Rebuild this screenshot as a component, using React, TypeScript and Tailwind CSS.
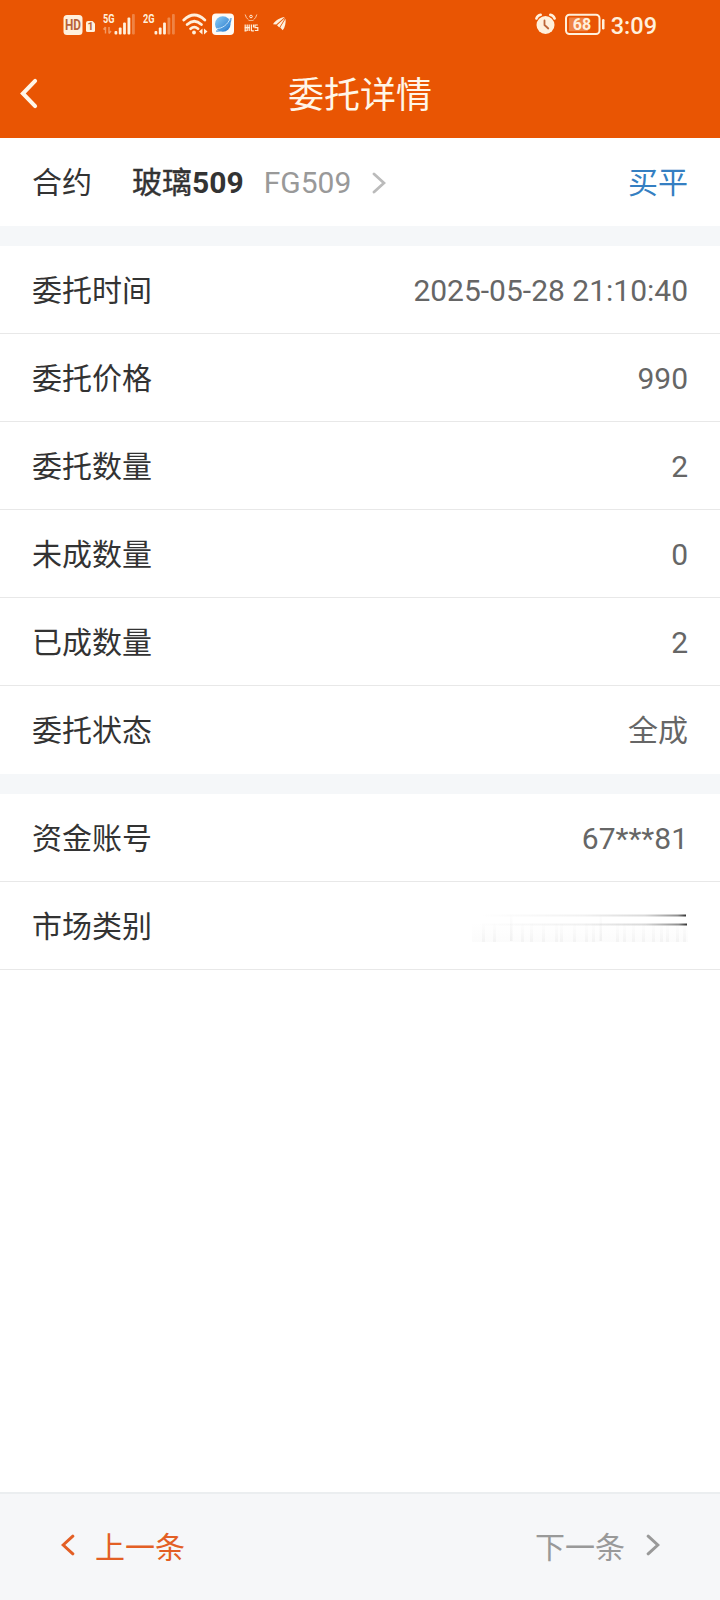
import React from "react";

type RowData = { label: string; value: React.ReactNode };

const CREAM = "#fff0dc";

function HdIcon() {
  return (
    <svg width="34" height="24" viewBox="0 0 34 24" className="ml-[63px]">
      <rect x="0.5" y="3" width="19" height="20" rx="3.5" fill={CREAM} />
      <text x="10" y="18" textAnchor="middle" fontSize="14" fontWeight="700" fill="#b8633a" className="font-['Roboto',sans-serif]" textLength="16" lengthAdjust="spacingAndGlyphs">HD</text>
      <path d="M25 9h4.500l2.500 2.500V18.500q0 1.500-1.500 1.500H24.500q-1.500 0-1.500-1.500V11q0-2 2-2z" fill={CREAM} />
      <text x="27.400" y="18.200" textAnchor="middle" fontSize="10.500" fontWeight="700" fill="#b8633a" className="font-['Roboto',sans-serif]">1</text>
    </svg>
  );
}

function SignalIcon({ label, weak }: { label: string; weak?: boolean }) {
  return (
    <svg width="35" height="24" viewBox="0 0 35 24">
      <text x="0" y="10.500" fontSize="12.500" fontWeight="700" fill={CREAM} textLength="11.500" lengthAdjust="spacingAndGlyphs" className="font-['Roboto',sans-serif]">{label}</text>
      {!weak && <path d="M2.500 21.500v-6.500M0.500 17.500l2-2.500M6 15v6.500M8 19l-2 2.500" stroke={CREAM} strokeWidth="1.400" strokeOpacity=".45" fill="none" />}
      <g fill={CREAM}>
        <rect x="11.500" y="19" width="2.800" height="3.500" rx="1" />
        <rect x="15.800" y="15.500" width="2.800" height="7" rx="1" />
        <rect x="20.100" y="10.500" width="2.800" height="12" rx="1" />
        <rect x="24.500" y="5.500" width="2.800" height="17" rx="1" opacity={weak ? 0.35 : 1} />
        <rect x="29" y="2" width="2.800" height="20.500" rx="1" opacity=".3" />
      </g>
    </svg>
  );
}

function WifiIcon() {
  return (
    <svg width="26" height="24" viewBox="0 0 26 24" fill="none" stroke={CREAM} strokeWidth="2.800" strokeLinecap="round">
      <path d="M1.800 8Q12.300-2 22.800 8M5.200 12.500Q12.300 6 19.400 12.500M8.600 16.700Q12.300 13.500 16 16.700" />
      <circle cx="12" cy="20.500" r="1.900" fill={CREAM} stroke="none" />
      <path d="M20.500 16.500V22.500l-3.500-3zM22 16.500V22.500l3.500-3z" fill={CREAM} stroke="none" />
    </svg>
  );
}

function GlobeIcon() {
  return (
    <svg width="22" height="24" viewBox="0 0 22 24" className="ml-1">
      <defs>
        <linearGradient id="globe" x1="0" y1="0" x2="1" y2="1">
          <stop offset="0" stopColor="#8ccdf4" />
          <stop offset="1" stopColor="#2475cb" />
        </linearGradient>
      </defs>
      <rect y="1.500" width="22" height="21.500" rx="4" fill="#fffaf4" />
      <circle cx="10.800" cy="12" r="7.800" fill="url(#globe)" />
      <path d="M4.500 16.500C10 17 16.500 12 17.800 6.500" stroke="#c4e4fa" strokeWidth="1" fill="none" />
      <path d="M4 19C11 19.500 19 13.500 19 6" stroke="#4a97dc" strokeWidth="1.200" fill="none" />
    </svg>
  );
}

function EmblemIcon() {
  return (
    <svg width="15" height="24" viewBox="0 0 15 24" className="ml-[10px]" fill="none" stroke={CREAM}>
      <path d="M1.200 2.500Q2 6 4.200 7.500M12.800 2.500Q12 6 9.800 7.500" strokeWidth="1" opacity=".75" />
      <circle cx="7" cy="4.500" r="1.300" strokeWidth="1" />
      <path d="M4.500 8.500h5" strokeWidth="1" opacity=".6" />
      <path d="M1.200 12.500v6.500M3.200 12.500v6.500M5.200 12.500v6.500M0.500 15.700h5.500M0.500 18.800h2M7.400 12.500v6.500M7.400 18.800h2.500M9.500 12.500v3M13.800 13h-2.800v2.700h2.800v2.800h-3" strokeWidth="1.200" />
    </svg>
  );
}

function WingIcon() {
  return (
    <svg width="14" height="24" viewBox="0 0 14 24" className="ml-[14px]" fill={CREAM}>
      <path d="M11.800 5C7.500 5.500 2.500 8 0 12.300l3.300.2zM12.300 5.800L4 13.300l2.300 2.200zM12.600 6.700L7.200 15.500l2.500 2.700C12 15.500 13 11 12.600 6.700z" />
    </svg>
  );
}

function AlarmIcon() {
  return (
    <svg width="22" height="24" viewBox="0 0 22 24">
      <circle cx="10.500" cy="13" r="9" fill={CREAM} />
      <path d="M1.400 6.500Q2.500 3.500 5.700 2.800M15.300 2.800Q18.500 3.500 19.600 6.500" stroke={CREAM} strokeWidth="2.500" fill="none" strokeLinecap="round" />
      <path d="M9.500 8.500v4.500l3.800 3.500" stroke="#bd663a" strokeWidth="1.800" fill="none" strokeLinecap="round" />
    </svg>
  );
}

function BatteryIcon() {
  return (
    <svg width="42" height="24" viewBox="0 0 42 24" className="ml-[7px]">
      <rect x="2" y="2.700" width="33.500" height="19.300" rx="3.500" fill="none" stroke={CREAM} strokeWidth="2" />
      <rect x="5" y="5.500" width="19" height="13.700" rx="1" fill={CREAM} opacity=".3" />
      <rect x="38" y="7" width="2.500" height="10.500" rx="1.200" fill={CREAM} />
      <text x="18" y="18" textAnchor="middle" fontSize="16" fontWeight="700" fill={CREAM} className="font-['Roboto',sans-serif]">68</text>
    </svg>
  );
}

function Chevron({ dir, w, h, stroke, className }: { dir: "left" | "right"; w: number; h: number; stroke: number; className?: string }) {
  const i = stroke * 0.72;
  const d = dir === "left"
    ? `M${w - i} ${i}L${i} ${h / 2}L${w - i} ${h - i}`
    : `M${i} ${i}L${w - i} ${h / 2}L${i} ${h - i}`;
  return (
    <svg width={w} height={h} viewBox={`0 0 ${w} ${h}`} className={className} fill="none" stroke="currentColor" strokeWidth={stroke} strokeLinecap="round">
      <path d={d} />
    </svg>
  );
}

function Row({ label, value, last }: RowData & { last?: boolean }) {
  return (
    <div className={`flex h-[88px] items-center justify-between px-8 pt-[2px] ${last ? "" : "border-b border-[#e8e8e8]"}`}>
      <span className="text-[#333333]">{label}</span>
      <span className="text-[#666666]">{value}</span>
    </div>
  );
}

function MaskedValue() {
  return (
    <svg width="216" height="34" viewBox="0 0 216 34" className="mb-[2px] block">
      <defs>
        <linearGradient id="streak" x1="0" x2="1" y1="0" y2="0">
          <stop offset="0" stopColor="#555" stopOpacity="0" />
          <stop offset=".5" stopColor="#555" stopOpacity=".08" />
          <stop offset=".8" stopColor="#555" stopOpacity=".22" />
          <stop offset=".96" stopColor="#444" stopOpacity=".6" />
          <stop offset="1" stopColor="#333" stopOpacity="1" />
        </linearGradient>
        <linearGradient id="smear" x1="0" x2="0" y1="0" y2="1">
          <stop offset="0" stopColor="#888" stopOpacity="0" />
          <stop offset="1" stopColor="#888" stopOpacity=".1" />
        </linearGradient>
      </defs>
      <rect x="8" y="5.500" width="206" height="2" fill="url(#streak)" />
      <rect x="4" y="14.500" width="211" height="2" fill="url(#streak)" />
      <g opacity=".65">
        {[10, 21, 49, 58, 70, 83, 88, 101, 113, 120, 144, 151, 160, 170, 180, 188, 194, 204, 211].map((x) => (
          <rect key={x} x={x} y="14" width="3" height="19" fill="url(#smear)" />
        ))}
      </g>
      <rect x="0" y="14" width="216" height="19" fill="url(#smear)" opacity=".3" />
      <rect x="38" y="4" width="2.500" height="28" fill="url(#smear)" />
      <rect x="127.500" y="4" width="2.500" height="28" fill="url(#smear)" />
    </svg>
  );
}

const orderRows: RowData[] = [
  { label: "委托时间", value: "2025-05-28 21:10:40" },
  { label: "委托价格", value: "990" },
  { label: "委托数量", value: "2" },
  { label: "未成数量", value: "0" },
  { label: "已成数量", value: "2" },
  { label: "委托状态", value: "全成" },
];

export default function App() {
  return (
    <div className="flex h-[1600px] w-[720px] flex-col overflow-hidden bg-white font-['Roboto','Noto_Sans_CJK_SC',sans-serif] text-[30px] leading-[44px]">
      <header className="h-[138px] shrink-0 bg-[#e95503]">
        <div className="flex h-12 items-center justify-between pr-[63px]">
          <div className="flex items-center">
            <HdIcon />
            <div className="ml-[6px] flex gap-[5px]">
              <SignalIcon label="5G" />
              <SignalIcon label="2G" weak />
            </div>
            <div className="ml-[4px] flex items-center">
              <WifiIcon />
              <GlobeIcon />
              <EmblemIcon />
              <WingIcon />
            </div>
          </div>
          <div className="flex items-center">
            <AlarmIcon />
            <BatteryIcon />
            <span className="ml-[5px] mt-[3px] text-[23.500px] font-medium leading-6 text-[#fff0dc]">3:09</span>
          </div>
        </div>
        <div className="grid h-[90px] grid-cols-[1fr_auto_1fr] items-center text-[#fff6e8]">
          <Chevron dir="left" w={18} h={31} stroke={4} className="ml-[20px]" />
          <h1 className="pt-[6px] text-[36px] font-normal">委托详情</h1>
        </div>
      </header>

      <section className="flex h-[88px] shrink-0 items-center px-8 pt-[2px]">
        <span className="text-[#333333]">合约</span>
        <span className="ml-10 text-[#333333] [-webkit-text-stroke:0.4px_#333333]">玻璃</span>
        <b className="font-bold text-[#333333]">509</b>
        <span className="ml-5 text-[#999999]">FG509</span>
        <Chevron dir="right" w={14} h={22} stroke={2.8} className="ml-[21px] text-[#bbbbbb]" />
        <span className="ml-auto text-[#357fc2]">买平</span>
      </section>

      <div className="h-5 shrink-0 bg-[#f5f7f9]" />
      <section className="shrink-0">
        {orderRows.map((row, i) => (
          <Row key={row.label} {...row} last={i === orderRows.length - 1} />
        ))}
      </section>
      <div className="h-5 shrink-0 bg-[#f5f7f9]" />
      <section className="shrink-0">
        <Row label="资金账号" value="67***81" />
        <Row label="市场类别" value={<MaskedValue />} />
      </section>

      <footer className="mt-auto flex h-[108px] shrink-0 items-center justify-between border-t-2 border-[#ebeef0] bg-[#f6f7f9] pl-[61px] pr-[60px]">
        <button className="flex items-center text-[#e35f25]">
          <Chevron dir="left" w={14} h={22} stroke={3} className="mb-[4px]" />
          <span className="ml-5 pt-px">上一条</span>
        </button>
        <button className="flex items-center text-[#999999]">
          <span className="pt-px">下一条</span>
          <Chevron dir="right" w={14} h={22} stroke={3} className="mb-[4px] ml-[21px]" />
        </button>
      </footer>
    </div>
  );
}
